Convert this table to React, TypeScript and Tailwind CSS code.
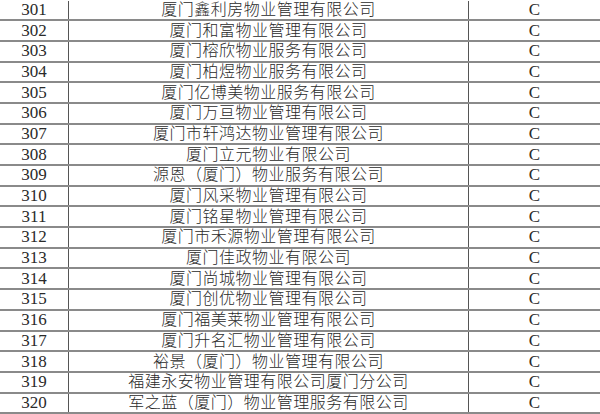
const rows: [number, string][] = [
  [301, "厦门鑫利房物业管理有限公司"],
  [302, "厦门和富物业管理有限公司"],
  [303, "厦门榕欣物业服务有限公司"],
  [304, "厦门柏煜物业服务有限公司"],
  [305, "厦门亿博美物业服务有限公司"],
  [306, "厦门万亘物业管理有限公司"],
  [307, "厦门市轩鸿达物业管理有限公司"],
  [308, "厦门立元物业有限公司"],
  [309, "源恩（厦门）物业服务有限公司"],
  [310, "厦门风采物业管理有限公司"],
  [311, "厦门铭星物业管理有限公司"],
  [312, "厦门市禾源物业管理有限公司"],
  [313, "厦门佳政物业有限公司"],
  [314, "厦门尚城物业管理有限公司"],
  [315, "厦门创优物业管理有限公司"],
  [316, "厦门福美莱物业管理有限公司"],
  [317, "厦门升名汇物业管理有限公司"],
  [318, "裕景（厦门）物业管理有限公司"],
  [319, "福建永安物业管理有限公司厦门分公司"],
  [320, "军之蓝（厦门）物业管理服务有限公司"],
];

export default function App() {
  return (
    <div className="w-[600px] h-[414px] overflow-hidden bg-white text-[#2a2a2a] font-['Liberation_Serif','Noto_Sans_CJK_SC',serif]">
      <div className="pt-[0.5px]">
        {rows.map(([no, name]) => (
          <div
            key={no}
            className="grid grid-cols-[69px_400px_1fr] h-[20.7px] border-b-2 border-[#8a8a8a] leading-[18px]"
          >
            <div className="flex items-center justify-center border-r border-[#555] text-[17px]">
              {no}
            </div>
            <div className="flex items-center justify-center border-r border-[#555] text-[16px] font-light tracking-[0.5px]">
              {name}
            </div>
            <div className="flex items-center justify-center text-[17px]">C</div>
          </div>
        ))}
      </div>
    </div>
  );
}
